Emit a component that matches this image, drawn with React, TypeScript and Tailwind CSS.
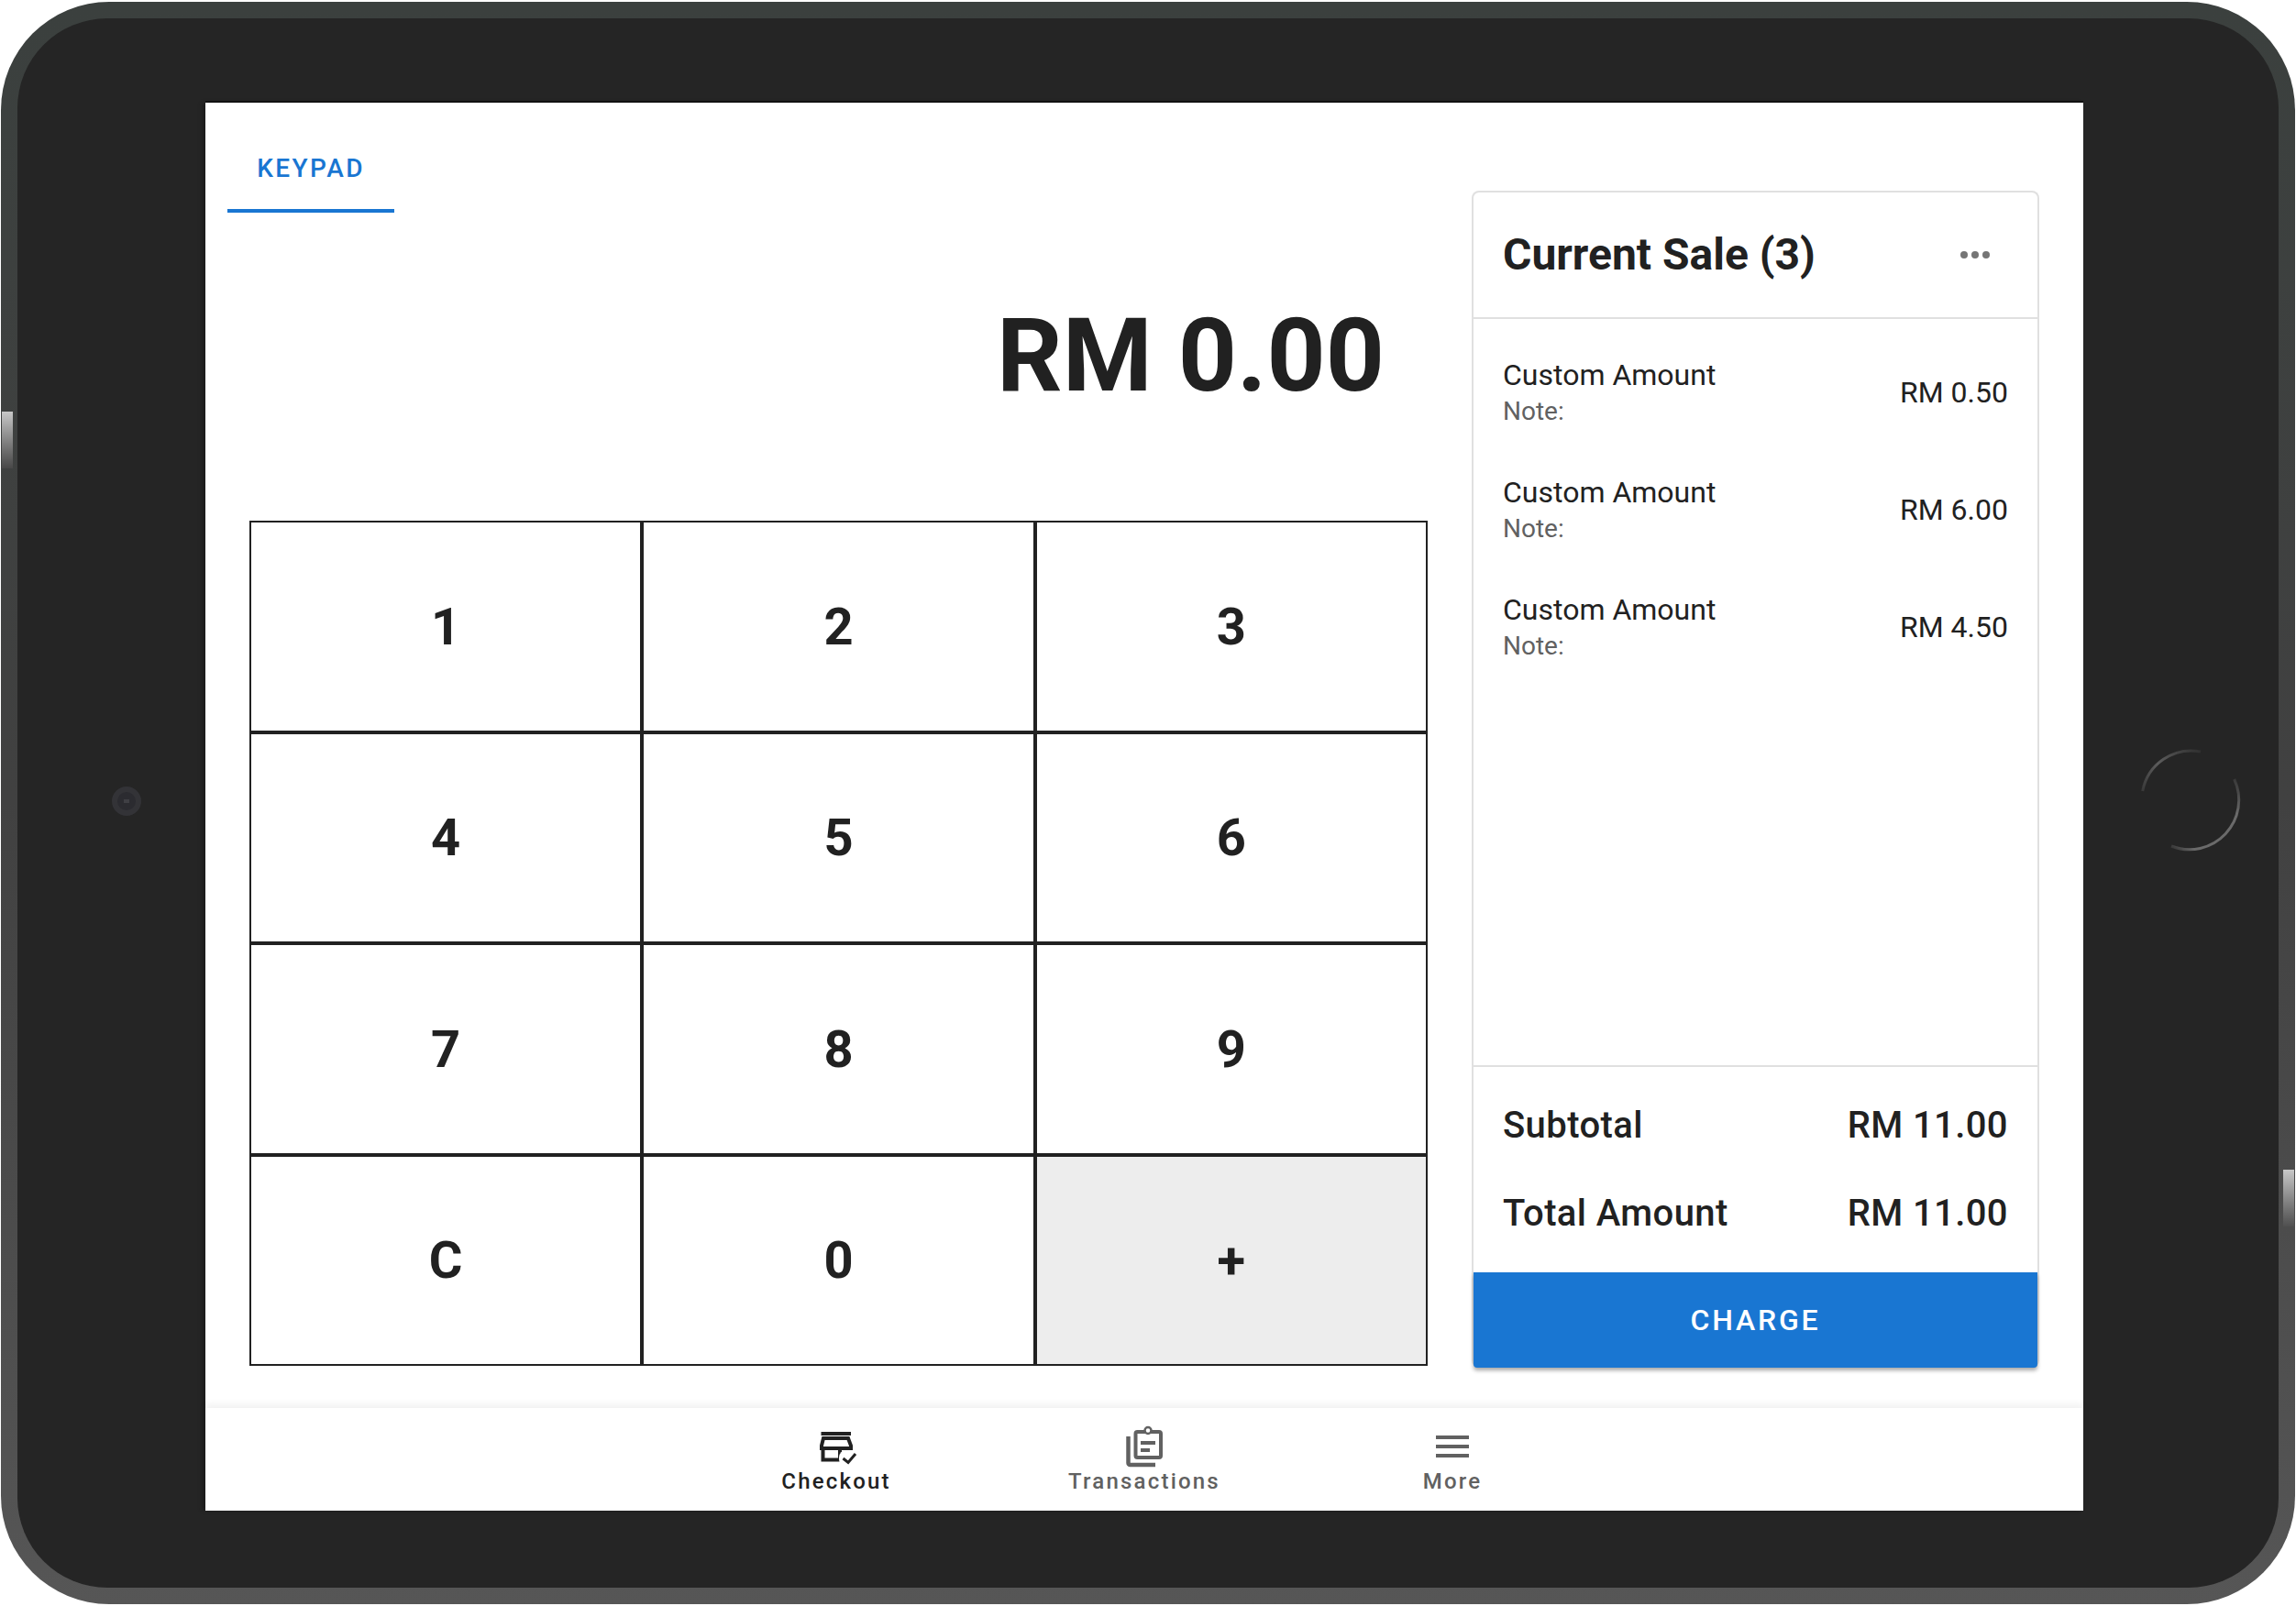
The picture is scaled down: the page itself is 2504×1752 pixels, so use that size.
const keys = ["1", "2", "3", "4", "5", "6", "7", "8", "9", "C", "0", "+"];

const items = [{ price: "RM 0.50" }, { price: "RM 6.00" }, { price: "RM 4.50" }];

function CheckoutIcon() {
  return (
    <svg width="48" height="48" viewBox="0 0 48 48" fill="none" className="overflow-visible">
      <rect x="7.500" y="4" width="32.500" height="4" fill="#212121" />
      <path d="M10 11h27l3 8v3H8v-3z" stroke="#212121" strokeWidth="4" />
      <path d="M9.500 24v10.500h18.500V24" stroke="#212121" strokeWidth="4" />
      <rect x="27" y="24" width="20" height="18" rx="8" fill="#fff" />
      <path d="M31.500 33l5.500 4.500L45 28" stroke="#212121" strokeWidth="3" />
    </svg>
  );
}

function TransactionsIcon() {
  return (
    <svg width="48" height="48" viewBox="0 0 48 48" fill="none" className="overflow-visible">
      <path d="M6.500 9v29a2 2 0 0 0 2 2H36" stroke="#616161" strokeWidth="4.500" />
      <rect x="14.500" y="4" width="27.500" height="28" rx="2" stroke="#616161" strokeWidth="4" />
      <circle cx="28" cy="2.500" r="3.500" stroke="#616161" strokeWidth="2.500" fill="#fff" />
      <rect x="20" y="14" width="16" height="4" fill="#616161" />
      <rect x="20" y="22" width="10" height="4" fill="#616161" />
    </svg>
  );
}

function MoreIcon() {
  return (
    <svg width="48" height="48" viewBox="0 0 48 48" fill="#616161">
      <rect x="6" y="8" width="36" height="4" />
      <rect x="6" y="18" width="36" height="4" />
      <rect x="6" y="28" width="36" height="4" />
    </svg>
  );
}

export default function App() {
  return (
    <div className="w-[2504px] h-[1752px] bg-white pt-[2px] font-['Roboto',sans-serif] text-[#212121]">
      {/* Tablet frame */}
      <div className="w-[2502px] h-[1748px] ml-[1px] rounded-[118px] p-[18px] bg-gradient-to-b from-[#3b403e] via-[#414141] to-[#565656]">
        <div className="relative w-full h-full rounded-[98px] bg-[#252525] pt-[92px] pl-[205px]">
          <div className="absolute left-[-17px] top-[429px] w-[12px] h-[62px] bg-gradient-to-b from-[#c8c8c8] to-[#484848]" />
          <div className="absolute right-[-17px] top-[1256px] w-[12px] h-[62px] bg-gradient-to-b from-[#c8c8c8] to-[#505050]" />
          <div className="absolute left-[103px] top-[838px] w-[32px] h-[32px] rounded-full border-[6px] border-[#333337] bg-[#2b2b30] flex items-center justify-center">
            <i className="w-[6px] h-[4px] bg-[#3f3f44]" />
          </div>
          <svg className="absolute left-[2312px] top-[796px]" width="116" height="116" viewBox="0 0 116 116" fill="none">
            <defs>
              <linearGradient id="arcA" gradientUnits="userSpaceOnUse" x1="6" y1="47" x2="69" y2="4">
                <stop offset="0" stopColor="#3a3a3a" />
                <stop offset="0.4" stopColor="#5c5c5c" />
                <stop offset="1" stopColor="#303030" />
              </linearGradient>
              <linearGradient id="arcB" gradientUnits="userSpaceOnUse" x1="106" y1="34" x2="37" y2="107">
                <stop offset="0" stopColor="#3a3a3a" />
                <stop offset="0.25" stopColor="#6a6a6a" />
                <stop offset="0.85" stopColor="#6a6a6a" />
                <stop offset="1" stopColor="#3a3a3a" />
              </linearGradient>
            </defs>
            <path d="M5.700 47A54 54 0 0 1 69 4" stroke="url(#arcA)" strokeWidth="3" />
            <path d="M105.700 34A54 54 0 0 1 37 107" stroke="url(#arcB)" strokeWidth="3" />
          </svg>

          {/* Screen */}
          <div className="w-[2048px] h-[1536px] bg-white flex flex-col shadow-[0_-2px_0_#111111,-4px_0_4px_-1px_#1c1c1c]">
            <div className="flex-1 flex min-h-0">
              <div className="w-[1381px] pl-[24px] flex flex-col">
                <div className="w-[182px] h-[120px] flex items-center justify-center border-b-[4px] border-[#1976d2] pt-[28px] text-[28px] font-medium tracking-[2.4px] text-[#1976d2]">
                  KEYPAD
                </div>
                <div className="h-[336px] pb-[25px] pr-[95px] flex items-center justify-end text-[112px] font-bold leading-none">
                  RM 0.00
                </div>
                <div className="ml-[24px] w-[1285px] h-[922px] grid grid-cols-3 grid-rows-4">
                  {keys.map((key) => (
                    <div
                      key={key}
                      className={
                        key === "+"
                          ? "flex items-center justify-center bg-[#ededed] border-[2px] border-[#212121] pt-[1px] text-[56px] font-bold"
                          : "flex items-center justify-center border-[2px] border-[#212121] pt-[1px] text-[56px] font-bold"
                      }
                    >
                      {key}
                    </div>
                  ))}
                </div>
              </div>

              <div className="pt-[96px]">
                <div className="w-[619px] h-[1284px] rounded-[8px] border-[2px] border-b-0 border-[#e0e0e0] flex flex-col">
                  <div className="h-[138px] flex items-center justify-between pl-[32px] pr-[52px] border-b-[2px] border-[#e0e0e0]">
                    <span className="text-[48px] font-bold">Current Sale (3)</span>
                    <span className="flex gap-[4px]">
                      <i className="w-[8px] h-[8px] rounded-full bg-[#757575]" />
                      <i className="w-[8px] h-[8px] rounded-full bg-[#757575]" />
                      <i className="w-[8px] h-[8px] rounded-full bg-[#757575]" />
                    </span>
                  </div>
                  <div className="flex-1 pt-[15px]">
                    {items.map((item, i) => (
                      <div key={i} className="h-[128px] px-[32px] flex items-center justify-between">
                        <div>
                          <div className="text-[32px] leading-[44px]">Custom Amount</div>
                          <div className="text-[28px] leading-[36px] text-[#616161]">Note:</div>
                        </div>
                        <div className="text-[32px] pt-[2px]">{item.price}</div>
                      </div>
                    ))}
                  </div>
                  <div className="h-[226px] px-[32px] pt-[16px] border-t-[2px] border-[#e0e0e0] text-[40px] font-medium tracking-[0.4px]">
                    <div className="h-[96px] flex items-center justify-between">
                      <span>Subtotal</span>
                      <span>RM 11.00</span>
                    </div>
                    <div className="h-[96px] flex items-center justify-between">
                      <span>Total Amount</span>
                      <span>RM 11.00</span>
                    </div>
                  </div>
                  <div className="h-[104px] flex items-center justify-center rounded-b-[4px] bg-[#1976d2] text-white text-[32px] font-medium tracking-[2.8px] shadow-[0_3px_4px_rgba(0,0,0,0.35)]">
                    CHARGE
                  </div>
                </div>
              </div>
            </div>

            {/* Bottom nav */}
            <div className="h-[112px] flex justify-center shadow-[0_-4px_8px_rgba(0,0,0,0.06)]">
              <div className="w-[336px] flex flex-col items-center pt-[22px] text-[#212121]">
                <CheckoutIcon />
                <span className="text-[24px] leading-[28px] font-medium tracking-[2.2px] -mt-[4px]">Checkout</span>
              </div>
              <div className="w-[336px] flex flex-col items-center pt-[22px] text-[#616161]">
                <TransactionsIcon />
                <span className="text-[24px] leading-[28px] font-medium tracking-[2.2px] -mt-[4px]">Transactions</span>
              </div>
              <div className="w-[336px] flex flex-col items-center pt-[22px] text-[#616161]">
                <MoreIcon />
                <span className="text-[24px] leading-[28px] font-medium tracking-[2.2px] -mt-[4px]">More</span>
              </div>
            </div>
          </div>
        </div>
      </div>
    </div>
  );
}
